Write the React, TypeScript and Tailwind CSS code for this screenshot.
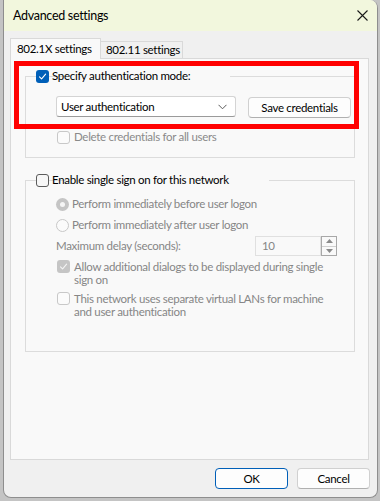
import React from "react";

const Check = ({ color = "#ffffff" }: { color?: string }) => (
  <svg width="9" height="9" viewBox="0 0 9 9" fill="none">
    <path d="M1.5 4.8 L3.6 6.8 L7.6 2.2" stroke={color} strokeWidth="1.1" strokeLinecap="round" strokeLinejoin="round" />
  </svg>
);

function Box({ checked = false, disabled = false }: { checked?: boolean; disabled?: boolean }) {
  if (checked && !disabled) {
    return (
      <span className="w-[13px] h-[13px] shrink-0 rounded-[3px] bg-[#005fb8] flex items-center justify-center">
        <Check />
      </span>
    );
  }
  if (checked && disabled) {
    return (
      <span className="w-[13px] h-[13px] shrink-0 rounded-[3px] bg-[#c5c5c5] flex items-center justify-center">
        <Check color="#f4f4f4" />
      </span>
    );
  }
  return (
    <span
      className={
        disabled
          ? "w-[13px] h-[13px] shrink-0 rounded-[3px] border border-[#c8c8c8] bg-[#fbfbfb]"
          : "w-[13px] h-[13px] shrink-0 rounded-[3px] border border-[#5c5c5c] bg-[#f7f7f7]"
      }
    />
  );
}

function Radio({ checked = false }: { checked?: boolean }) {
  if (checked) {
    return (
      <span className="w-[13px] h-[13px] shrink-0 rounded-full bg-[#c5c5c5] flex items-center justify-center">
        <span className="w-[5px] h-[5px] rounded-full bg-[#f5f5f5]" />
      </span>
    );
  }
  return <span className="w-[13px] h-[13px] shrink-0 rounded-full border border-[#c8c8c8] bg-[#fbfbfb]" />;
}

export default function App() {
  return (
    <div className="w-[380px] h-[501px] bg-[#c4c4c4] pl-[3px] pr-[2px] pb-[3px] font-['Lato','Liberation_Sans',sans-serif] text-[11.5px] tracking-[-0.3px] text-black leading-[14px] whitespace-nowrap">
      <div className="h-full flex flex-col rounded-b-[8px] rounded-tr-[8px] border border-t-0 border-[#8e8e8e] bg-[#f0f0f0] overflow-hidden">
        {/* title bar */}
        <div className="h-[31px] shrink-0 bg-[#f2f7dd] flex items-center justify-between pl-[9px] pr-[9px]">
          <span className="text-[12.5px]">Advanced settings</span>
          <svg width="11" height="11" viewBox="0 0 11 11">
            <path d="M0.5 0.5 L10.5 10.5 M10.5 0.5 L0.5 10.5" stroke="#1a1a1a" strokeWidth="1.1" />
          </svg>
        </div>

        <div className="flex-1 flex flex-col pl-[6px] pt-[7px]">
          {/* tabs */}
          <div className="h-[21px] flex items-end -mb-px">
            <div className="relative z-10 h-[21px] w-[91px] border border-b-0 border-[#d9d9d9] bg-[#f9f9f9] pl-[6px] pt-[3px]">
              802.1X settings
            </div>
            <div className="h-[18px] w-[83px] -ml-px border border-[#d9d9d9] bg-[#f0f0f0] pl-[5px] pt-[1px]">
              802.11 settings
            </div>
          </div>

          {/* panel */}
          <div className="relative w-[359px] h-[402px] border border-[#d9d9d9] bg-[#f9f9f9] pl-[14px] pt-[10px]">
            <fieldset className="w-[330px] h-[89px] border border-[#dcdcdc] pl-[30px]">
              <legend className="ml-[10px] px-[2px] -translate-x-[32px]">
                <span className="flex items-center gap-[3px] pr-[6px]">
                  <Box checked />
                  <span>Specify authentication mode:</span>
                </span>
              </legend>
              <div className="flex items-start mt-[13px]">
                <div className="w-[180px] h-[21px] rounded-[3px] border border-[#d4d4d4] border-b-[#9a9a9a] bg-white flex items-center justify-between pl-[4px] pr-[8px]">
                  <span>User authentication</span>
                  <svg width="9" height="6" viewBox="0 0 9 6">
                    <path d="M0.5 0.8 L4.5 4.8 L8.5 0.8" stroke="#5a5a5a" strokeWidth="1" fill="none" />
                  </svg>
                </div>
                <div className="ml-[12px] mt-px w-[103px] h-[21px] rounded-[4px] border border-[#d0d0d0] border-b-[#b0b0b0] bg-[#fdfdfd] flex items-center justify-center">
                  Save credentials
                </div>
              </div>
              <div className="flex items-center gap-[4px] mt-[12px] ml-[1px] text-[#8a8a8a]">
                <Box disabled />
                <span>Delete credentials for all users</span>
              </div>
            </fieldset>

            <fieldset className="mt-[15px] w-[330px] h-[179px] border border-[#dcdcdc] pl-[30px] text-[#868686]">
              <legend className="ml-[10px] px-[2px] -translate-x-[32px]">
                <span className="flex items-center gap-[3px] pr-[6px] text-black">
                  <Box />
                  <span>Enable single sign on for this network</span>
                </span>
              </legend>
              <div className="flex items-center gap-[3px] mt-[10px]">
                <Radio checked />
                <span>Perform immediately before user logon</span>
              </div>
              <div className="flex items-center gap-[3px] mt-[7px]">
                <Radio />
                <span>Perform immediately after user logon</span>
              </div>
              <div className="flex items-center mt-[4px] mr-[17px] h-[20px]">
                <span>Maximum delay (seconds):</span>
                <div className="ml-auto flex h-[20px]">
                  <div className="w-[66px] h-[20px] border border-[#e0e0e0] bg-[#f9f9f9] pl-[6px] flex items-center">10</div>
                  <div className="w-[16px] h-[20px] border border-[#a8a8a8] flex flex-col">
                    <div className="flex-1 flex items-center justify-center border-b border-[#d0d0d0]">
                      <svg width="7" height="4" viewBox="0 0 7 4"><path d="M0 4 L3.5 0 L7 4 Z" fill="#8a8a8a" /></svg>
                    </div>
                    <div className="flex-1 flex items-center justify-center">
                      <svg width="7" height="4" viewBox="0 0 7 4"><path d="M0 0 L3.5 4 L7 0 Z" fill="#8a8a8a" /></svg>
                    </div>
                  </div>
                </div>
              </div>
              <div className="flex items-start gap-[4px] mt-[4px] ml-[1px] leading-[13px]">
                <Box checked disabled />
                <span>
                  Allow additional dialogs to be displayed during single
                  <br />
                  sign on
                </span>
              </div>
              <div className="flex items-start gap-[4px] mt-[6px] ml-[1px] leading-[13px]">
                <Box disabled />
                <span>
                  This network uses separate virtual LANs for machine
                  <br />
                  and user authentication
                </span>
              </div>
            </fieldset>

            {/* annotation overlay */}
            <div className="absolute left-[3px] top-[2px] w-[345px] h-[68px] border-[5px] border-[#ff0000]" />
          </div>

          {/* footer */}
          <div className="flex justify-end gap-[9px] pr-[7px] mt-[8px]">
            <div className="w-[73px] h-[21px] rounded-[4px] border border-[#005fb8] bg-[#fdfdfd] flex items-center justify-center">OK</div>
            <div className="w-[73px] h-[21px] rounded-[4px] border border-[#d0d0d0] border-b-[#b0b0b0] bg-[#fdfdfd] flex items-center justify-center">Cancel</div>
          </div>
        </div>
      </div>
    </div>
  );
}
